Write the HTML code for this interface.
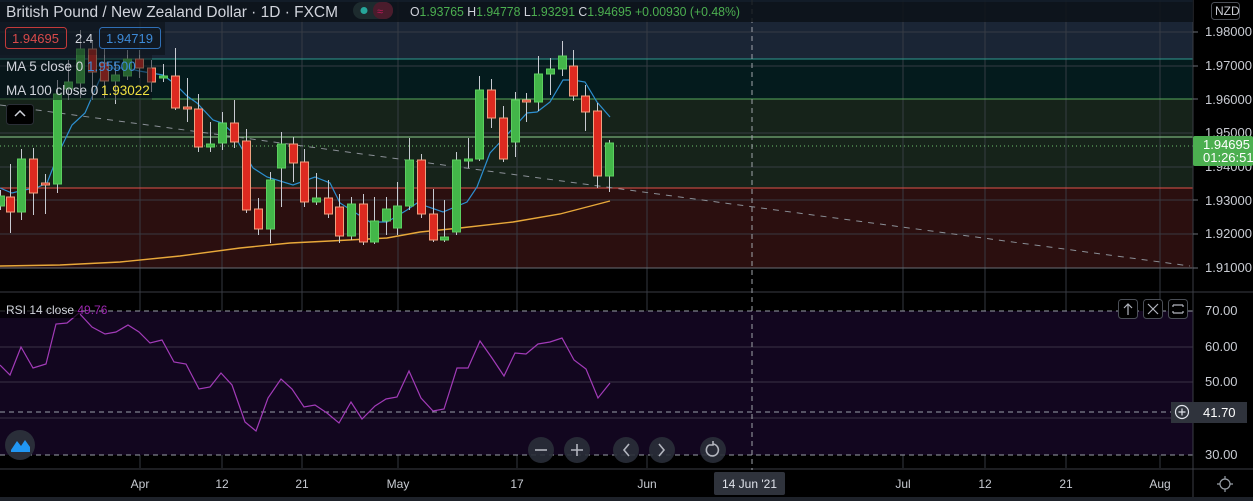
<!DOCTYPE html>
<html><head><meta charset="utf-8"><style>
html,body{margin:0;padding:0;background:#000;width:1253px;height:501px;overflow:hidden}
svg{display:block}
text{font-family:"Liberation Sans",sans-serif}
</style></head><body>
<svg width="1253" height="501" viewBox="0 0 1253 501" xmlns="http://www.w3.org/2000/svg">
<rect width="1253" height="501" fill="#000"/>
<rect x="0" y="0" width="1193" height="59" fill="#1a2535"/>
<rect x="0" y="59" width="1193" height="40" fill="#041b1d"/>
<rect x="0" y="99" width="1193" height="89" fill="#16231a"/>
<rect x="0" y="188" width="1193" height="80" fill="#2b0f0f"/>
<g stroke="#3a3f47" stroke-width="1" opacity="0.9">
<line x1="0" y1="32" x2="1193" y2="32"/><line x1="0" y1="66" x2="1193" y2="66"/><line x1="0" y1="133" x2="1193" y2="133"/><line x1="0" y1="167" x2="1193" y2="167"/><line x1="0" y1="200" x2="1193" y2="200"/><line x1="0" y1="234" x2="1193" y2="234"/>
<line x1="140" y1="0" x2="140" y2="468"/><line x1="222" y1="0" x2="222" y2="468"/><line x1="302" y1="0" x2="302" y2="468"/><line x1="398" y1="0" x2="398" y2="468"/><line x1="517" y1="0" x2="517" y2="468"/><line x1="647" y1="0" x2="647" y2="468"/><line x1="903" y1="0" x2="903" y2="468"/><line x1="985" y1="0" x2="985" y2="468"/><line x1="1066" y1="0" x2="1066" y2="468"/><line x1="1160" y1="0" x2="1160" y2="468"/>
</g>
<line x1="0" y1="1" x2="1193" y2="1" stroke="#5b8fd6"/>
<line x1="0" y1="59" x2="1193" y2="59" stroke="#2f9a8e"/>
<line x1="0" y1="99" x2="1193" y2="99" stroke="#58a85a"/>
<line x1="0" y1="137" x2="1193" y2="137" stroke="#8fcf8f"/>
<line x1="0" y1="146" x2="1193" y2="146" stroke="#6fc06f" stroke-dasharray="1 3"/>
<line x1="0" y1="188" x2="1193" y2="188" stroke="#e0504a"/>
<line x1="0" y1="268" x2="1193" y2="268" stroke="#6a6e76"/>
<line x1="0" y1="105" x2="1190" y2="266" stroke="#8a8f96" stroke-dasharray="6 6"/>
<line x1="0" y1="292" x2="1253" y2="292" stroke="#3a3d44"/>
<rect x="0" y="311" width="1193" height="144" fill="#12061f"/>
<g stroke="#3a3244"><line x1="0" y1="347" x2="1193" y2="347"/><line x1="0" y1="382" x2="1193" y2="382"/><line x1="0" y1="418" x2="1193" y2="418"/></g>
<g stroke="#9aa0a8" stroke-dasharray="5 4"><line x1="0" y1="311" x2="1193" y2="311"/><line x1="0" y1="412" x2="1193" y2="412"/><line x1="0" y1="455" x2="1193" y2="455"/></g>
<line x1="0" y1="469" x2="1253" y2="469" stroke="#3a3d44"/>
<line x1="1193" y1="0" x2="1193" y2="501" stroke="#3a3d44"/>
<line x1="752" y1="0" x2="752" y2="470" stroke="#a0a4aa" stroke-dasharray="5 4"/>
<polyline fill="none" stroke="#a23bb8" stroke-width="1.2" points="0,365 10,375 21,347 33,368 46,364 56,324 67,323 79,313 92,327 105,334 116,332 128,325 139,332 150,343 162,340 174,362 186,364 199,389 210,387 221,373 232,385 245,422 256,431 268,398 281,379 292,389 304,407 315,405 327,413 339,423 351,402 362,419 375,406 386,399 397,397 409,371 421,398 433,411 444,409 457,368 468,368 480,341 492,358 504,376 515,353 526,354 538,344 550,342 562,338 574,360 586,369 598,398 610,383"/>
<polyline fill="none" stroke="#e8a83a" stroke-width="1.4" points="0,266 60,265 120,262 180,256 240,248 290,243 330,241 387,238 420,232 460,228 513,222 560,214 610,201"/>
<polyline fill="none" stroke="#2d8fd0" stroke-width="1.2" points="0,188 12,193 24,190 36,188 47,183 60,150 72,125 85,113 95,90 105,68 127,68 139,71 151,73 163,75 175,84 187,96 197,103 213,120 222,123 233,133 253,168 267,177 293,185 315,177 330,183 340,203 370,222 387,222 407,210 417,203 443,212 467,202 477,187 490,153 505,137 527,113 537,112 550,102 563,80 573,80 585,82 597,102 610,117"/>
<g id="c" stroke-width="1"></g>
<rect x="0" y="0" width="1193" height="22" fill="#0c1218" opacity="0.85"/>
<rect x="0" y="22" width="165" height="33" fill="#0c1218" opacity="0.6"/>
<rect x="0" y="55" width="152" height="45" fill="#0c1218" opacity="0.5"/>
<text x="6" y="17" font-size="15.5" fill="#d1d4dc" textLength="332" lengthAdjust="spacingAndGlyphs">British Pound / New Zealand Dollar · 1D · FXCM</text>
<rect x="353" y="2" width="40" height="17" rx="8.5" fill="#1d2b2e"/><rect x="373" y="2" width="20" height="17" rx="8" fill="#4a1c2c"/>
<circle cx="364" cy="10.5" r="3.5" fill="#26a69a"/><text x="377" y="15" font-size="11" fill="#c2185b">≈</text>
<text x="410" y="16" font-size="13" fill="#4caf50" textLength="330" lengthAdjust="spacingAndGlyphs"><tspan fill="#d1d4dc">O</tspan>1.93765 <tspan fill="#d1d4dc">H</tspan>1.94778 <tspan fill="#d1d4dc">L</tspan>1.93291 <tspan fill="#d1d4dc">C</tspan>1.94695 +0.00930 (+0.48%)</text>
<rect x="5.5" y="27.5" width="61" height="21" rx="3" fill="none" stroke="#c33a3a"/>
<text x="12" y="43" font-size="13" fill="#d94a4a">1.94695</text>
<text x="75" y="43" font-size="13" fill="#d1d4dc">2.4</text>
<rect x="99.5" y="27.5" width="61" height="21" rx="3" fill="none" stroke="#2f6fb5"/>
<text x="106" y="43" font-size="13" fill="#3d8ad6">1.94719</text>
<text x="6" y="71" font-size="13.5" fill="#d1d4dc">MA 5 close 0</text>
<text x="87" y="71" font-size="13.5" fill="#3d8ad6">1.95500</text>
<text x="6" y="95" font-size="13.5" fill="#d1d4dc">MA 100 close 0</text>
<text x="101" y="95" font-size="13.5" fill="#f0e040">1.93022</text>
<rect x="6.5" y="104.5" width="27" height="20" rx="3" fill="#000" stroke="#2a2e36"/>
<path d="M15 116 L20 111 L25 116" fill="none" stroke="#d1d4dc" stroke-width="1.5"/>
<rect x="0" y="300" width="80" height="18" fill="#000" opacity="0.7"/>
<text x="6" y="314" font-size="12" fill="#d1d4dc">RSI 14 close <tspan fill="#9c27b0">49.76</tspan></text>
<circle cx="20" cy="445" r="15" fill="#2a2e39"/>
<path d="M11 450 L17 441 L21 446 L25 440 L30 447 L30 452 L11 452 Z" fill="#2196f3"/>
<g fill="#2a2e39" opacity="0.9"><circle cx="541" cy="450" r="13"/><circle cx="577" cy="450" r="13"/><circle cx="626" cy="450" r="13"/><circle cx="662" cy="450" r="13"/><circle cx="713" cy="450" r="13"/></g>
<g stroke="#b2b5be" stroke-width="1.6" fill="none"><path d="M535 450 H547"/><path d="M571 450 H583 M577 444 V456"/><path d="M629 444 L624 450 L629 456"/><path d="M659 444 L664 450 L659 456"/><path d="M709 445 A6 6 0 1 0 713 444 M713 441 L713 445 L709 445"/></g>
<g fill="#000" stroke="#4a4e56"><rect x="1118.5" y="299.5" width="19" height="19" rx="3"/><rect x="1143.5" y="299.5" width="19" height="19" rx="3"/><rect x="1168.5" y="299.5" width="19" height="19" rx="3"/></g>
<g stroke="#b2b5be" stroke-width="1.2" fill="none"><path d="M1128 315 V304 M1124 308 L1128 304 L1132 308"/><path d="M1148 304 L1158 314 M1158 304 L1148 314"/><path d="M1173 305 H1183 M1173 313 H1183 M1173 305 V307 M1183 305 V307 M1173 311 V313 M1183 311 V313"/></g>
<g font-size="13" fill="#c8cbd2">
<rect x="1211.5" y="2.5" width="28" height="17" rx="3" fill="#000" stroke="#4a4e56"/>
<text x="1215" y="15" font-size="12">NZD</text>
<text x="1205" y="36">1.98000</text><text x="1205" y="70">1.97000</text><text x="1205" y="104">1.96000</text><text x="1205" y="137">1.95000</text><text x="1205" y="171">1.94000</text><text x="1205" y="205">1.93000</text><text x="1205" y="238">1.92000</text><text x="1205" y="272">1.91000</text>
<text x="1205" y="315">70.00</text><text x="1205" y="351">60.00</text><text x="1205" y="386">50.00</text><text x="1205" y="459">30.00</text>
</g>
<g stroke="#6a6e76"><line x1="1193" y1="32" x2="1198" y2="32"/><line x1="1193" y1="66" x2="1198" y2="66"/><line x1="1193" y1="99" x2="1198" y2="99"/><line x1="1193" y1="200" x2="1198" y2="200"/><line x1="1193" y1="234" x2="1198" y2="234"/><line x1="1193" y1="268" x2="1198" y2="268"/></g>
<rect x="1193" y="136" width="60" height="30" rx="2" fill="#4caf50"/>
<text x="1203" y="149" font-size="13" fill="#fff">1.94695</text>
<text x="1203" y="162" font-size="13" fill="#fff">01:26:51</text>
<rect x="1171" y="402" width="22" height="21" fill="#2f333c"/>
<rect x="1193" y="402" width="54" height="21" fill="#2f333c"/>
<circle cx="1182" cy="412" r="6.5" fill="none" stroke="#e0e3eb" stroke-width="1.2"/>
<path d="M1182 408.5 V415.5 M1178.5 412 H1185.5" stroke="#e0e3eb" stroke-width="1.2"/>
<text x="1203" y="417" font-size="13" fill="#fff">41.70</text>
<g font-size="12" fill="#c8cbd2" text-anchor="middle">
<text x="140" y="488">Apr</text><text x="222" y="488">12</text><text x="302" y="488">21</text><text x="398" y="488">May</text><text x="517" y="488">17</text><text x="647" y="488">Jun</text><text x="903" y="488">Jul</text><text x="985" y="488">12</text><text x="1066" y="488">21</text><text x="1160" y="488">Aug</text>
</g>
<rect x="714" y="472" width="71" height="23" rx="2" fill="#2f333c"/>
<text x="749.5" y="488" font-size="12" fill="#e0e3eb" text-anchor="middle">14 Jun '21</text>
<circle cx="1225" cy="484" r="5" fill="none" stroke="#9aa0a8" stroke-width="1.2"/>
<path d="M1225 476 V479 M1225 489 V492 M1217 484 H1220 M1230 484 H1233" stroke="#9aa0a8" stroke-width="1.2"/>
<rect x="0" y="497" width="1253" height="4" fill="#1e222a"/>
</svg>
<script>
var C=[[0,196,206,190,210,'g'],[10,197,212,164,233,'r'],[21,159,212,149,220,'g'],[33,159,193,148,215,'r'],[45,183,185,174,214,'r'],[57,94,184,80,193,'g'],[68,82,89,60,100,'g'],[80,49,83,30,98,'g'],[92,49,72,40,100,'r'],[104,63,81,48,98,'r'],[115,75,81,62,104,'g'],[127,59,76,50,80,'g'],[139,59,68,50,78,'r'],[151,68,82,60,92,'r'],[163,76,78,64,82,'g'],[175,76,108,48,110,'r'],[187,107,109,78,122,'r'],[198,109,147,94,152,'r'],[210,144,147,122,152,'g'],[222,123,143,112,150,'g'],[234,123,142,100,148,'r'],[246,141,210,129,213,'r'],[258,209,229,198,235,'r'],[270,180,229,172,243,'g'],[281,144,168,132,207,'g'],[293,144,163,137,182,'r'],[304,162,202,149,207,'r'],[316,198,202,173,205,'g'],[328,198,214,180,218,'r'],[339,207,236,194,243,'r'],[351,204,236,197,240,'g'],[363,204,242,194,245,'r'],[374,221,242,197,244,'g'],[386,209,221,197,235,'g'],[397,206,228,182,235,'g'],[409,160,206,138,210,'g'],[421,160,214,154,218,'r'],[433,214,240,189,242,'r'],[444,237,240,200,242,'g'],[456,160,232,152,235,'g'],[468,159,160,138,168,'g'],[479,90,159,76,161,'g'],[491,90,118,79,128,'r'],[503,118,159,106,162,'r'],[515,100,142,92,157,'g'],[526,100,102,93,122,'r'],[538,74,102,56,111,'g'],[550,69,74,58,95,'g'],[562,56,69,41,76,'g'],[573,66,96,50,101,'r'],[585,96,112,85,131,'r'],[597,111,176,103,188,'r'],[609,143,176,140,192,'g']];
var s='',g=document.getElementById('c');
C.forEach(function(c){var x=c[0],col=c[5]=='g'?'#43b649':'#dd2a20',bd=c[5]=='g'?'#5ccf60':'#f0a080';
s+='<line x1="'+(x+0.5)+'" y1="'+c[3]+'" x2="'+(x+0.5)+'" y2="'+c[4]+'" stroke="#c8cbd2"/>';
s+='<rect x="'+(x-3.5)+'" y="'+c[1]+'" width="8" height="'+Math.max(2,c[2]-c[1])+'" fill="'+col+'" stroke="'+bd+'"/>';});
g.innerHTML=s;
</script>
</body></html>
